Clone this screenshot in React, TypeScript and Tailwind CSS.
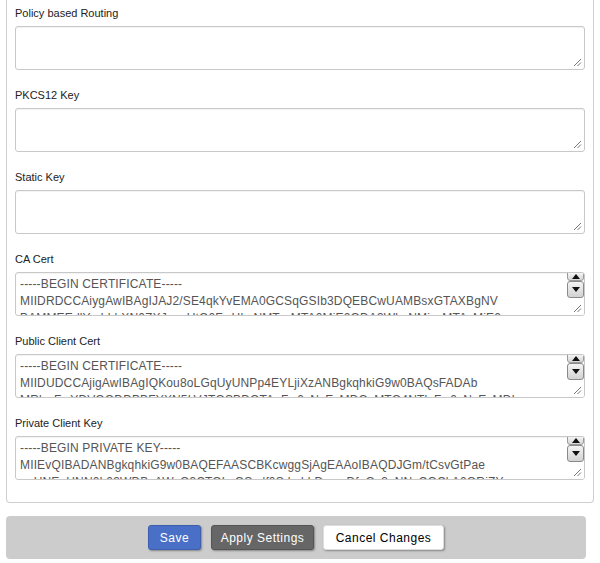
const Grip = () => (
  <svg width="9" height="9" viewBox="0 0 9 9" className="absolute right-[2px] bottom-[2px]">
    <line x1="8" y1="1" x2="1" y2="8" stroke="#777" strokeWidth="1" />
    <line x1="8" y1="4.5" x2="4.5" y2="8" stroke="#777" strokeWidth="1" />
  </svg>
);

const Arrow = ({ up }: { up?: boolean }) => (
  <svg width="8" height="5" viewBox="0 0 8 5">
    {up ? <polygon points="0,5 8,5 4,0" fill="#111" /> : <polygon points="0,0 8,0 4,5" fill="#111" />}
  </svg>
);

const ScrollBar = () => (
  <div className="absolute right-0 top-0 bottom-0 w-[17px] bg-white flex flex-col">
    <div className="h-[9px] mt-[-1px] border border-[#9a9a9a] rounded-b-[3px] bg-gradient-to-b from-[#f4f4f4] to-[#d6d6d6] flex items-center justify-center overflow-hidden">
      <Arrow up />
    </div>
    <div className="h-[17px] border border-[#8a8a8a] rounded-[3px] bg-gradient-to-b from-[#f4f4f4] to-[#d2d2d2] flex items-center justify-center">
      <Arrow />
    </div>
  </div>
);

const Field = ({ label, lines }: { label: string; lines?: string[] }) => (
  <div className="mb-[18px]">
    <div className="text-[11px] leading-[14px] text-[#222]">{label}</div>
    <div className="relative mt-[6px] h-[44px] border border-[#c8c8c8] rounded-[3px] bg-white overflow-hidden shadow-[inset_0_1px_1px_rgba(0,0,0,0.05)]">
      {lines && (
        <div className="pl-[4px] pt-[3px] text-[12px] leading-[17px] tracking-[0.15px] text-[#555] whitespace-pre">
          {lines.join("\n")}
        </div>
      )}
      {lines && <ScrollBar />}
      <Grip />
    </div>
  </div>
);

export default function App() {
  return (
    <div className="w-[600px] h-[563px] bg-white overflow-hidden" style={{ fontFamily: '"Liberation Sans", Arial, sans-serif' }}>
      <div className="ml-[6px] w-[588px] border-x border-b border-[#cfcfcf] rounded-b-[4px] pt-[6px] pb-[4px] px-[8px]">
        <Field label="Policy based Routing" />
        <Field label="PKCS12 Key" />
        <Field label="Static Key" />
        <Field
          label="CA Cert"
          lines={[
            "-----BEGIN CERTIFICATE-----",
            "MIIDRDCCAiygAwIBAgIJAJ2/SE4qkYvEMA0GCSqGSIb3DQEBCwUAMBsxGTAXBgNV",
            "BAMMEEdlYmbhbXN0ZXJucnUtQ0FwHhcNMTcxMTA0MjE0ODA3WhcNMjcxMTAyMjE0",
          ]}
        />
        <Field
          label="Public Client Cert"
          lines={[
            "-----BEGIN CERTIFICATE-----",
            "MIIDUDCCAjigAwIBAgIQKou8oLGqUyUNPp4EYLjiXzANBgkqhkiG9w0BAQsFADAb",
            "MRkwFwYDVQQDDBBFYXN5LVJTQSBDQTAeFw0xNzExMDQyMTQ4NTlaFw0yNzExMDIy",
          ]}
        />
        <Field
          label="Private Client Key"
          lines={[
            "-----BEGIN PRIVATE KEY-----",
            "MIIEvQIBADANBgkqhkiG9w0BAQEFAASCBKcwggSjAgEAAoIBAQDJGm/tCsvGtPae",
            "uuHNEaHNN0L03WDBcAWvQ3CTOLcOSydf0SdmLbDamsDfnOs3aNNyCQCkA0ORjZYsm",
          ]}
        />
      </div>
      <div className="ml-[6px] mt-[13px] w-[580px] h-[43px] bg-[#cccccc] rounded-[4px] flex items-start justify-center gap-[9px] pt-[9px]">
        <button className="h-[25px] w-[53px] rounded-[3px] bg-[#4a6fc6] border border-[#3d5fae] text-white text-[12px] tracking-[0.5px] shadow-[1px_1px_2px_rgba(0,0,0,0.35)]">
          Save
        </button>
        <button className="h-[25px] w-[103px] ml-[1px] rounded-[3px] bg-[#666666] border border-[#555] text-white text-[12px] tracking-[0.5px] shadow-[1px_1px_2px_rgba(0,0,0,0.35)]">
          Apply Settings
        </button>
        <button className="h-[25px] w-[121px] rounded-[3px] bg-white border border-[#ddd] text-black text-[12px] tracking-[0.5px] shadow-[1px_1px_2px_rgba(0,0,0,0.35)]">
          Cancel Changes
        </button>
      </div>
    </div>
  );
}
